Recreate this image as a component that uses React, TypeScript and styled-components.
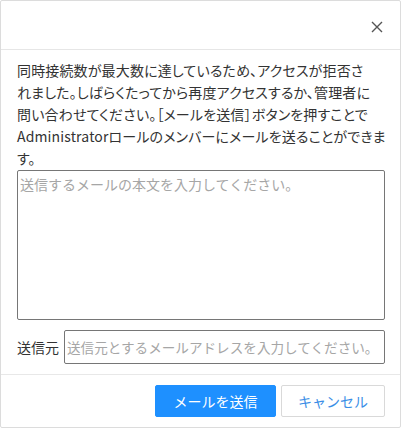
import styled, { createGlobalStyle } from 'styled-components';

const GlobalStyle = createGlobalStyle`
    html, body {
        margin: 0;
        padding: 0;
        background: #ffffff;
    }
    body {
        font-family: "Noto Sans CJK JP", "Noto Sans", sans-serif;
        color: #333333;
    }
    * {
        box-sizing: border-box;
    }
`;

const Dialog = styled.div`
    width: 401px;
    height: 428px;
    border: 1px solid #dcdcdc;
    border-radius: 2px;
    background: #ffffff;
    display: flex;
    flex-direction: column;
`;

const Header = styled.div`
    height: 49px;
    border-bottom: 1px solid #e6e6e6;
    display: flex;
    justify-content: flex-end;
    align-items: center;
    padding-right: 13px;
    padding-top: 4px;
`;

const CloseBtn = styled.button`
    width: 20px;
    height: 20px;
    padding: 0;
    border: none;
    background: transparent;
    display: flex;
    align-items: center;
    justify-content: center;
    cursor: pointer;
`;

const Body = styled.div`
    padding: 9px 15px 0 16px;
    display: flex;
    flex-direction: column;
`;

const Message = styled.p`
    margin: 0;
    font-size: 14px;
    line-height: 22px;
    white-space: nowrap;
    font-feature-settings: "palt";
    letter-spacing: 0.15px;
`;

const MailBody = styled.textarea`
    margin-top: 1px;
    width: 100%;
    height: 150px;
    border: 1px solid #767676;
    border-radius: 2px;
    padding: 2px 2px;
    font-family: inherit;
    font-size: 14px;
    line-height: 22px;
    color: #333333;
    resize: none;
    outline: none;
    &::placeholder {
        color: #a6a6a6;
    }
`;

const FromRow = styled.div`
    margin-top: 10px;
    display: flex;
    align-items: center;
    gap: 5px;
`;

const FromLabel = styled.label`
    font-size: 14px;
    color: #333333;
    white-space: nowrap;
`;

const FromInput = styled.input`
    flex: 1;
    min-width: 0;
    height: 34px;
    border: 1px solid #767676;
    border-radius: 2px;
    padding: 0 2px;
    font-family: inherit;
    font-size: 13.6px;
    color: #333333;
    outline: none;
    &::placeholder {
        color: #a6a6a6;
    }
`;

const Footer = styled.div`
    margin-top: 10px;
    border-top: 1px solid #e8e8e8;
    padding: 10px 15px 9px;
    display: flex;
    justify-content: flex-end;
    gap: 5px;
`;

const Btn = styled.button<{ $primary?: boolean; $w: number }>`
    width: ${p => p.$w}px;
    height: 32px;
    border-radius: 2px;
    font-family: inherit;
    font-size: 14px;
    cursor: pointer;
    border: 1px solid ${p => (p.$primary ? '#1e90ff' : '#d9d9d9')};
    background: ${p => (p.$primary ? '#1e90ff' : '#ffffff')};
    color: ${p => (p.$primary ? '#ffffff' : '#3a8ee6')};
`;

const App = () => {
    return (
        <>
            <GlobalStyle />
            <Dialog>
                <Header>
                    <CloseBtn aria-label="close">
                        <svg width="12" height="12" viewBox="0 0 12 12">
                            <path d="M1 1 L11 11 M11 1 L1 11" stroke="#555" strokeWidth="1.4" fill="none" />
                        </svg>
                    </CloseBtn>
                </Header>
                <Body>
                    <Message>
                        同時接続数が最大数に達しているため、アクセスが拒否さ<br />
                        れました。しばらくたってから再度アクセスするか、管理者に<br />
                        問い合わせてください。［メールを送信］ボタンを押すことで<br />
                        Administratorロールのメンバーにメールを送ることができま<br />
                        す。
                    </Message>
                    <MailBody placeholder="送信するメールの本文を入力してください。" />
                    <FromRow>
                        <FromLabel>送信元</FromLabel>
                        <FromInput placeholder="送信元とするメールアドレスを入力してください。" />
                    </FromRow>
                </Body>
                <Footer>
                    <Btn $primary $w={121}>メールを送信</Btn>
                    <Btn $w={104}>キャンセル</Btn>
                </Footer>
            </Dialog>
        </>
    );
};

export default App;
